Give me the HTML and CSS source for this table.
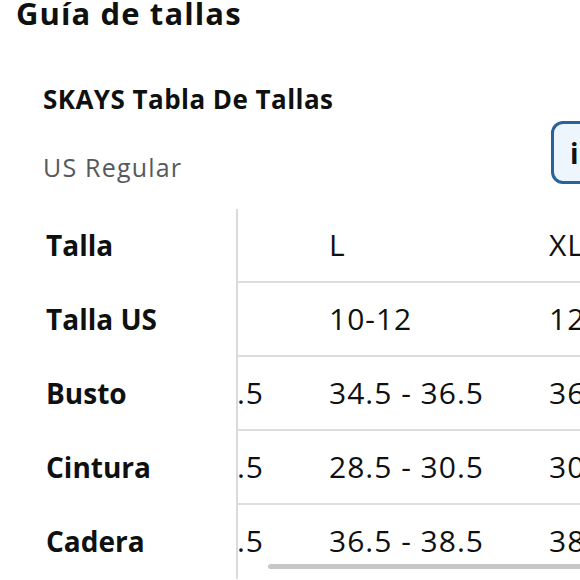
FILE: index.html
```html
<!DOCTYPE html>
<html lang="es">
<head>
<meta charset="utf-8">
<title>Guía de tallas</title>
<link rel="stylesheet" href="styles.css">
</head>
<body>
<h1 class="title">Guía de tallas</h1>
<section class="chart">
  <div class="chart-head">
    <div class="chart-text">
      <h2 class="brand">SKAYS Tabla De Tallas</h2>
      <p class="fit">US Regular</p>
    </div>
    <button class="info" type="button">i</button>
  </div>
</section>
<div class="table">
  <div class="labels">
    <div class="label">Talla</div>
    <div class="label">Talla US</div>
    <div class="label">Busto</div>
    <div class="label">Cintura</div>
    <div class="label">Cadera</div>
  </div>
  <div class="scroller">
    <div class="track">
      <div class="row">
        <div class="cell">M</div><div class="cell">L</div><div class="cell">XL</div><div class="cell">2XL</div>
      </div>
      <div class="row">
        <div class="cell">8-10</div><div class="cell">10-12</div><div class="cell">12-14</div><div class="cell">14-16</div>
      </div>
      <div class="row">
        <div class="cell">32.5 - 34.5</div><div class="cell">34.5 - 36.5</div><div class="cell">36.5 - 38.5</div><div class="cell">38.5 - 40.5</div>
      </div>
      <div class="row">
        <div class="cell">26.5 - 28.5</div><div class="cell">28.5 - 30.5</div><div class="cell">30.5 - 32.5</div><div class="cell">32.5 - 34.5</div>
      </div>
      <div class="row last">
        <div class="cell">34.5 - 36.5</div><div class="cell">36.5 - 38.5</div><div class="cell">38.5 - 40.5</div><div class="cell">40.5 - 42.5</div>
      </div>
    </div>
    <div class="scrollbar"></div>
  </div>
</div>
</body>
</html>
```
FILE: styles.css
```css
html, body {
  margin: 0;
  padding: 0;
  background: #ffffff;
}
body {
  width: 580px;
  height: 580px;
  overflow: hidden;
  padding-left: 16px;
  box-sizing: border-box;
  font-family: "Open Sans", "Noto Sans", sans-serif;
  color: #0f1111;
}
.title {
  margin: 0;
  font-size: 31px;
  line-height: 26px;
  font-weight: 700;
  letter-spacing: 1.1px;
}
.chart {
  padding-left: 27px;
  margin-top: 58px;
}
.chart-head {
  display: flex;
  align-items: flex-start;
}
.chart-text {
  flex: 0 0 508px;
}
.brand {
  margin: 0;
  font-size: 26px;
  line-height: 30px;
  font-weight: 700;
  letter-spacing: 0.45px;
}
.fit {
  margin: 38px 0 0;
  font-size: 25px;
  line-height: 30px;
  color: #565959;
  letter-spacing: 1.2px;
}
.info {
  flex: none;
  margin-top: 37px;
  width: 64px;
  height: 63px;
  box-sizing: border-box;
  border: 3px solid #2a629c;
  border-radius: 12px;
  background: #edf5fd;
  font-family: "Open Sans", sans-serif;
  font-size: 28px;
  font-weight: 700;
  color: #0f1111;
  text-align: left;
  padding: 0 0 0 16px;
}
.table {
  display: flex;
  margin-top: 25px;
}
.labels {
  flex: 0 0 220px;
  padding-left: 30px;
  box-sizing: border-box;
}
.label {
  height: 74px;
  line-height: 72px;
  font-size: 28px;
  font-weight: 700;
}
.scroller {
  position: relative;
  flex: 1;
  height: 370px;
  border-left: 2px solid #d9dbdb;
  overflow: hidden;
}
.track {
  margin-left: -149px;
  width: 880px;
}
.row {
  display: flex;
  height: 72px;
  border-bottom: 2px solid #dcdede;
}
.row.last {
  border-bottom: none;
}
.cell {
  flex: 0 0 220px;
  box-sizing: border-box;
  padding-left: 20px;
  font-size: 30px;
  line-height: 72px;
  letter-spacing: 1px;
  white-space: nowrap;
}
.scrollbar {
  position: absolute;
  left: 30px;
  right: -20px;
  top: 355px;
  height: 5px;
  border-radius: 3px;
  background: #c6c7c7;
}
```
